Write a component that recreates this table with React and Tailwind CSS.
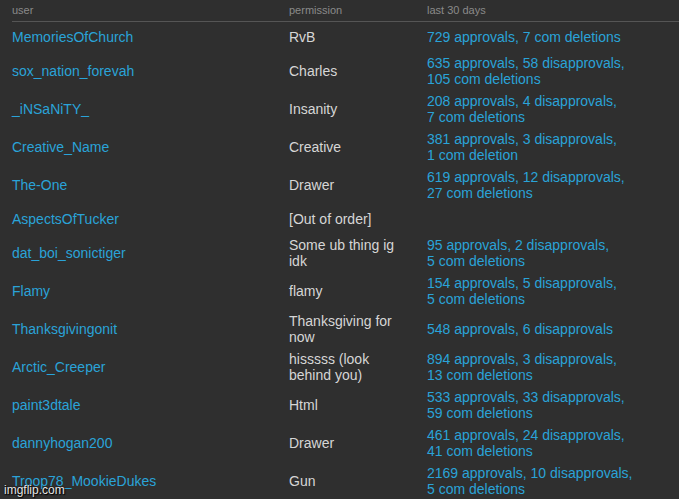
import React from "react";

const rows = [
  { user: "MemoriesOfChurch", perm: ["RvB"], stats: ["729 approvals, 7 com deletions"] },
  { user: "sox_nation_forevah", perm: ["Charles"], stats: ["635 approvals, 58 disapprovals,", "105 com deletions"] },
  { user: "_iNSaNiTY_", perm: ["Insanity"], stats: ["208 approvals, 4 disapprovals,", "7 com deletions"] },
  { user: "Creative_Name", perm: ["Creative"], stats: ["381 approvals, 3 disapprovals,", "1 com deletion"] },
  { user: "The-One", perm: ["Drawer"], stats: ["619 approvals, 12 disapprovals,", "27 com deletions"] },
  { user: "AspectsOfTucker", perm: ["[Out of order]"], stats: [] },
  { user: "dat_boi_sonictiger", perm: ["Some ub thing ig", "idk"], stats: ["95 approvals, 2 disapprovals,", "5 com deletions"] },
  { user: "Flamy", perm: ["flamy"], stats: ["154 approvals, 5 disapprovals,", "5 com deletions"] },
  { user: "Thanksgivingonit", perm: ["Thanksgiving for", "now"], stats: ["548 approvals, 6 disapprovals"] },
  { user: "Arctic_Creeper", perm: ["hisssss (look", "behind you)"], stats: ["894 approvals, 3 disapprovals,", "13 com deletions"] },
  { user: "paint3dtale", perm: ["Html"], stats: ["533 approvals, 33 disapprovals,", "59 com deletions"] },
  { user: "dannyhogan200", perm: ["Drawer"], stats: ["461 approvals, 24 disapprovals,", "41 com deletions"] },
  { user: "Troop78_MookieDukes", perm: ["Gun"], stats: ["2169 approvals, 10 disapprovals,", "5 com deletions"] },
];

function Lines({ items }) {
  return (
    <div>
      {items.map((t, i) => (
        <div key={i}>{t}</div>
      ))}
    </div>
  );
}

export default function App() {
  return (
    <div
      className="relative w-[679px] h-[499px] overflow-hidden bg-[#2f2f2f] pl-[12px]"
      style={{ fontFamily: '"Liberation Sans", Arial, sans-serif' }}
    >
      <div className="grid grid-cols-[277px_138px_1fr] h-[22px] items-center border-b border-[#555555] text-[11px] text-[#8a8a8a]">
        <div>user</div>
        <div>permission</div>
        <div>last 30 days</div>
      </div>
      {rows.map((r) => (
        <div
          key={r.user}
          className="grid grid-cols-[277px_138px_1fr] min-h-[30px] py-[3px] items-center text-[14px] leading-[16px]"
        >
          <div className="text-[#2aa3d8]">{r.user}</div>
          <div className="text-[#d6d6d6]">
            <Lines items={r.perm} />
          </div>
          <div className="text-[#2aa3d8]">
            <Lines items={r.stats} />
          </div>
        </div>
      ))}
      <div className="absolute left-[4px] bottom-[2px] text-[12px] leading-[14px] text-[#e6e6e6] [text-shadow:0_0_2px_#000,1px_1px_1px_#000]">
        imgflip.com
      </div>
    </div>
  );
}
